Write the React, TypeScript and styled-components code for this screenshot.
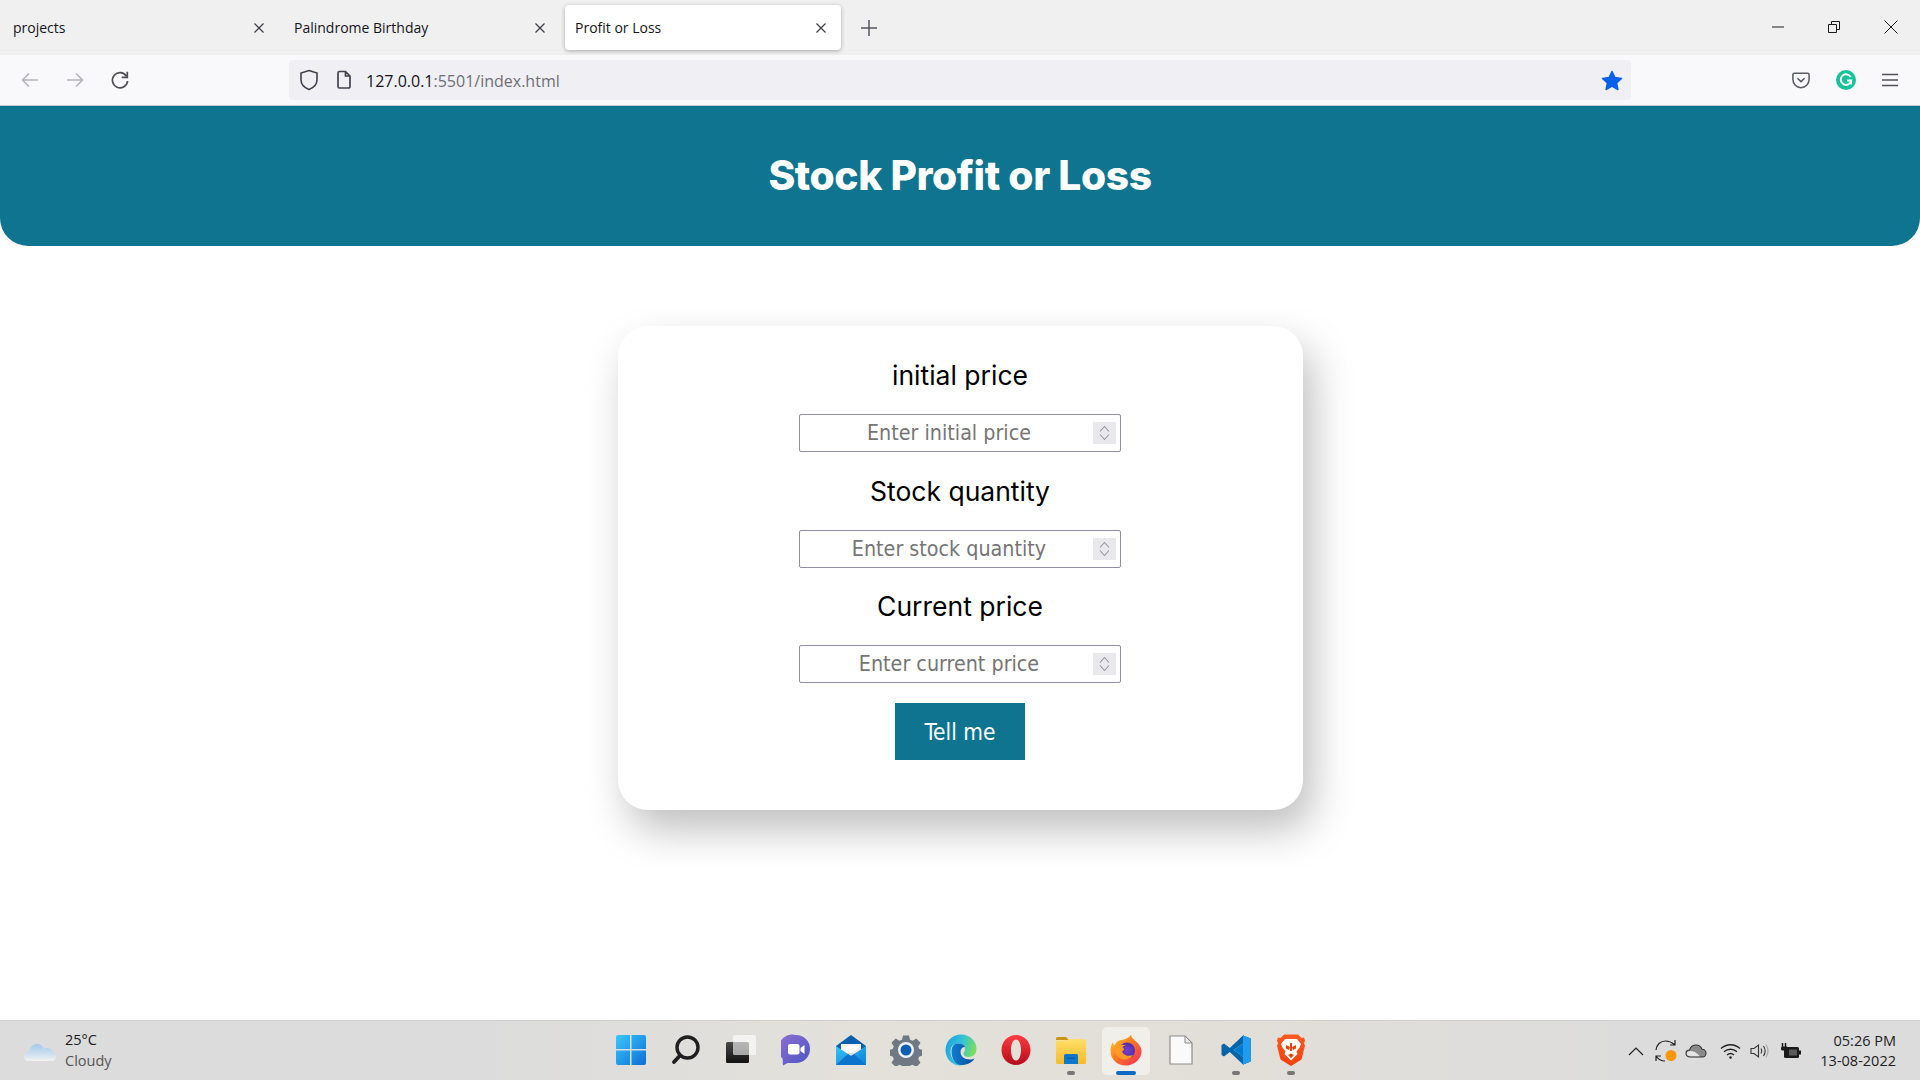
import React from "react";
import styled, { createGlobalStyle } from "styled-components";

const Global = createGlobalStyle`
  html, body { margin: 0; padding: 0; background: #fff; }
  * { box-sizing: border-box; }
`;

const UI = `"Open Sans", "Noto Sans", "Liberation Sans", sans-serif`;
const TITLE = `"Inter", "Lato", "Liberation Sans", sans-serif`;
const FORM = `"DejaVu Sans", "Open Sans", sans-serif`;

const Page = styled.div`
  width: 1920px;
  height: 1080px;
  display: flex;
  flex-direction: column;
  overflow: hidden;
  background: #fff;
`;

/* browser chrome */
const TabStrip = styled.div`
  height: 55px;
  flex: none;
  background: #f0f0f0;
  display: flex;
  align-items: center;
  padding-left: 3px;
  gap: 5px;
`;
const Tab = styled.div<{ $active?: boolean }>`
  width: 276px;
  height: 45px;
  padding: 0 14px 0 10px;
  display: flex;
  align-items: center;
  justify-content: space-between;
  font: 14px ${UI};
  color: #15141a;
  border-radius: 4px;
  background: ${(p) => (p.$active ? "#fff" : "transparent")};
  box-shadow: ${(p) => (p.$active ? "0 1px 4px rgba(0,0,0,.3)" : "none")};
`;
const NewTab = styled.div`
  width: 46px;
  display: flex;
  justify-content: center;
  color: #5b5b66;
`;
const Spacer = styled.div`
  flex: 1;
`;
const WindowControls = styled.div`
  display: flex;
  align-items: center;
  gap: 44px;
  padding-right: 22px;
  margin-top: -1px;
`;
const Toolbar = styled.div`
  height: 51px;
  flex: none;
  background: #f9f9fb;
  display: flex;
  align-items: center;
  border-bottom: 1px solid #c4c9cc;
  padding: 0 22px 0 20px;
`;
const NavGroup = styled.div`
  width: 269px;
  display: flex;
  align-items: center;
  gap: 25px;
`;
const UrlBar = styled.div`
  width: 1342px;
  height: 40px;
  background: #f0f0f4;
  border-radius: 4px;
  display: flex;
  align-items: center;
  padding: 0 8px 0 10px;
  gap: 17px;
`;
const UrlText = styled.div`
  flex: 1;
  font: 16px ${UI};
  color: #15141a;
  margin-left: -3px;
  padding-top: 2px;
  span {
    color: #6f6e75;
  }
`;
const ToolActions = styled.div`
  flex: 1;
  display: flex;
  align-items: center;
  justify-content: flex-end;
  gap: 26px;
`;

/* page */
const Banner = styled.header`
  height: 140px;
  flex: none;
  background: #0e7490;
  border-radius: 0 0 28px 28px;
  display: flex;
  align-items: center;
  justify-content: center;
  padding-bottom: 1px;
`;
const Title = styled.h1`
  margin: 0;
  font: 800 40.7px ${TITLE};
  letter-spacing: -0.4px;
  color: #fff;
`;
const Main = styled.main`
  flex: 1;
  display: flex;
  justify-content: center;
  padding-top: 80px;
`;
const Card = styled.form`
  width: 685px;
  height: 484px;
  border-radius: 30px;
  background: #fff;
  box-shadow: 10px 20px 40px rgba(0, 0, 0, 0.25);
  display: flex;
  flex-direction: column;
  align-items: center;
  padding-top: 29px;
`;
const Field = styled.label`
  height: 115.5px;
  display: flex;
  flex-direction: column;
  align-items: center;
`;
const FieldLabel = styled.span`
  height: 40px;
  margin-bottom: 19px;
  font: 400 26.5px/40px ${TITLE};
  color: #000;
`;
const InputBox = styled.div`
  width: 322px;
  height: 38px;
  border: 1px solid #8f8f9d;
  border-radius: 2px;
  display: flex;
  align-items: center;
  padding-right: 4px;
`;
const NumberInput = styled.input`
  flex: 1;
  min-width: 0;
  height: 100%;
  border: 0;
  outline: 0;
  background: transparent;
  text-align: center;
  padding: 0 0 1px 5px;
  font: 21.3px ${FORM};
  font-stretch: 75%;
  color: #15141a;
  appearance: textfield;
  &::placeholder {
    color: #757575;
    opacity: 1;
  }
  &::-webkit-inner-spin-button,
  &::-webkit-outer-spin-button {
    appearance: none;
    margin: 0;
  }
`;
const Spin = styled.span`
  flex: none;
  width: 23px;
  height: 22px;
  background: #e9e9ed;
  display: flex;
  align-items: center;
  justify-content: center;
`;
const Submit = styled.button`
  width: 130px;
  height: 57px;
  margin-top: 1.5px;
  border: 0;
  background: #0e7490;
  color: #fff;
  font: 22.5px ${FORM};
  font-stretch: 75%;
`;

/* taskbar */
const Taskbar = styled.footer`
  height: 60px;
  flex: none;
  border-top: 1px solid #cfcfcf;
  background: linear-gradient(90deg, #dcdcdc 0%, #dcdcdc 25%, #e3e1da 45%, #e2dfd9 65%, #dcdcdc 85%);
  display: grid;
  grid-template-columns: 1fr auto 1fr;
  align-items: center;
`;
const Weather = styled.div`
  display: flex;
  align-items: center;
  gap: 9px;
  padding-left: 24px;
`;
const WeatherText = styled.div`
  font: 14.5px/20.5px ${UI};
  color: #1a1a1a;
  small {
    display: block;
    font-size: 14.5px;
    color: #555;
  }
`;
const TaskIcons = styled.div`
  display: flex;
  gap: 7.08px;
  padding-left: 2px;
`;
const Tile = styled.div<{ $active?: boolean }>`
  position: relative;
  width: 48px;
  height: 48px;
  padding-bottom: 2px;
  border-radius: 5px;
  display: flex;
  align-items: center;
  justify-content: center;
  background: ${(p) => (p.$active ? "#f0efea" : "transparent")};
`;
const RunDot = styled.i<{ $active?: boolean }>`
  position: absolute;
  bottom: 0;
  left: 50%;
  transform: translateX(-50%);
  width: ${(p) => (p.$active ? "20px" : "8px")};
  height: 4px;
  border-radius: 2px;
  background: ${(p) => (p.$active ? "#0a6cc4" : "#777")};
`;
const Tray = styled.div`
  justify-self: end;
  display: flex;
  align-items: center;
  padding-right: 24px;
`;
const TrayIcon = styled.span<{ $gap: number }>`
  display: flex;
  margin-left: ${(p) => p.$gap}px;
`;
const Clock = styled.div`
  margin-left: 19px;
  text-align: right;
  font: 14.5px/20px ${UI};
  color: #222;
`;

/* drawings */
const Close = () => (
  <svg width="12" height="12" viewBox="0 0 12 12" fill="none" stroke="#3c3c44" strokeWidth="1.2">
    <path d="M1.5 1.5l9 9M10.5 1.5l-9 9" />
  </svg>
);
const Back = () => (
  <svg width="20" height="20" viewBox="0 0 20 20" fill="none" stroke="#b4b4ba" strokeWidth="1.6">
    <path d="M18 10H2.5M9 3.5L2.5 10 9 16.5" />
  </svg>
);
const Forward = () => (
  <svg width="20" height="20" viewBox="0 0 20 20" fill="none" stroke="#b4b4ba" strokeWidth="1.6">
    <path d="M2 10h15.5M11 3.5l6.5 6.5-6.5 6.5" />
  </svg>
);
const Reload = () => (
  <svg width="20" height="20" viewBox="0 0 20 20" fill="none" stroke="#4d4d55" strokeWidth="1.7">
    <path d="M16.5 6.2A7.6 7.6 0 1 0 17.6 11" />
    <path d="M17.3 1.8v5.6h-5.6" />
  </svg>
);
const Shield = () => (
  <svg width="20" height="22" viewBox="0 0 20 22" fill="none" stroke="#42414d" strokeWidth="1.6">
    <path d="M10 1.500l8 2.600v6.600c0 4.600-3.500 8-8 9.800-4.500-1.800-8-5.200-8-9.800V4.100z" />
  </svg>
);
const PageGlyph = () => (
  <svg width="16" height="20" viewBox="0 0 16 20" fill="none" stroke="#42414d" strokeWidth="1.7">
    <path d="M2 3a1.500 1.500 0 0 1 1.500-1.500H9.500L14 6v10.500A1.500 1.500 0 0 1 12.500 18h-9A1.500 1.500 0 0 1 2 16.500zM9.500 1.500V6H14" />
  </svg>
);
const Star = () => (
  <svg width="22" height="21" viewBox="0 0 22 21">
    <path
      fill="#0a60e8"
      stroke="#0a60e8"
      strokeWidth="1.5"
      strokeLinejoin="round"
      d="M11 1.500l2.900 6.100 6.600.8-4.900 4.500 1.300 6.600L11 16.200l-5.900 3.300 1.300-6.600L1.500 8.400l6.600-.8z"
    />
  </svg>
);
const Pocket = () => (
  <svg width="18" height="17" viewBox="0 0 20 18" fill="none" stroke="#5b5b66" strokeWidth="1.700">
    <path d="M2.500 1h15A1.500 1.500 0 0 1 19 2.500V8a9 9 0 0 1-18 0V2.500A1.500 1.500 0 0 1 2.500 1z" />
    <path strokeWidth="1.800" d="M6 6.500l4 3.800 4-3.800" />
  </svg>
);
const Grammarly = () => (
  <svg width="20" height="20" viewBox="0 0 20 20">
    <circle cx="10" cy="10" r="10" fill="#15c39a" />
    <path
      fill="none"
      stroke="#fff"
      strokeWidth="1.900"
      d="M14.700 7a5.300 5.300 0 1 0 .6 3.500h-4.300M15 11.500v3"
    />
  </svg>
);
const Menu = () => (
  <svg width="16" height="14" viewBox="0 0 16 14" stroke="#52525a" strokeWidth="1.500">
    <path d="M0 1.500h16M0 7h16M0 12.500h16" />
  </svg>
);
const Spinner = () => (
  <svg width="11" height="16" viewBox="0 0 11 16" fill="none" stroke="#9494a0" strokeWidth="1.1">
    <path d="M1 6.500l4.500-5 4.500 5M1 9.500l4.500 5 4.500-5" />
  </svg>
);

const Cloud = () => (
  <svg width="32" height="22" viewBox="0 0 32 22">
    <defs>
      <linearGradient id="wx" x1="0" y1="0" x2="0" y2="1">
        <stop offset="0" stopColor="#a5c8ec" />
        <stop offset=".6" stopColor="#cfe0f1" />
        <stop offset="1" stopColor="#f4f3ec" />
      </linearGradient>
    </defs>
    <path
      fill="url(#wx)"
      d="M5 21c-3 0-5-2-5-4.500S2.500 12 5 12c.800-5 4-8 8-8 3.500 0 6 2 7 5 1-.800 2.500-1.300 4-1 3.500.500 5 2.500 5.500 4.500 1.500.800 2.500 2.500 2.500 4 0 2.500-2 4.500-4.500 4.500z"
    />
  </svg>
);

const WinLogo = () => (
  <svg width="30" height="30" viewBox="0 0 30 30">
    <defs>
      <linearGradient id="win" x1="0" y1="0" x2="1" y2="1">
        <stop offset="0" stopColor="#3cc7fb" />
        <stop offset="1" stopColor="#0a6fd6" />
      </linearGradient>
    </defs>
    <path
      fill="url(#win)"
      d="M2 0h12v14H0V2a2 2 0 0 1 2-2zM15.500 0H28a2 2 0 0 1 2 2v12H15.500zM0 15.500h14V30H2a2 2 0 0 1-2-2zM15.500 15.500H30V28a2 2 0 0 1-2 2H15.500z"
    />
  </svg>
);
const SearchGlyph = () => (
  <svg width="30" height="30" viewBox="0 0 30 30" fill="none" stroke="#1f1f1f">
    <circle cx="16.500" cy="12.500" r="10.500" strokeWidth="3.400" />
    <path d="M9 20.500l-6 6.500" strokeWidth="3.800" strokeLinecap="round" />
  </svg>
);
const TaskView = () => (
  <svg width="30" height="30" viewBox="0 0 30 30">
    <defs>
      <linearGradient id="tv" x1="0" y1="0" x2="0" y2="1">
        <stop offset="0" stopColor="#4a4a4a" />
        <stop offset="1" stopColor="#111" />
      </linearGradient>
    </defs>
    <rect x="0" y="7" width="23" height="21" rx="1.500" fill="url(#tv)" />
    <rect x="7" y="0" width="23" height="20" rx="1.500" fill="#fff" fillOpacity=".6" />
  </svg>
);
const Chat = () => (
  <svg width="30" height="32" viewBox="0 0 30 32">
    <defs>
      <linearGradient id="chat" x1="0" y1="0" x2="1" y2="1">
        <stop offset="0" stopColor="#8f6fd0" />
        <stop offset="1" stopColor="#4a55c4" />
      </linearGradient>
    </defs>
    <path
      fill="url(#chat)"
      d="M15 1a14 14 0 0 1 0 28H6.500L2 31.500c-.500-2.500 0-5-.500-7A14 14 0 0 1 15 1z"
    />
    <rect x="7" y="10" width="11.500" height="10.500" rx="2" fill="#fff" />
    <path d="M19.500 14l4-3v9l-4-3z" fill="#fff" />
  </svg>
);
const Mail = () => (
  <svg width="30" height="30" viewBox="0 0 30 30">
    <defs>
      <linearGradient id="m1" x1="0" y1="0" x2="1" y2="1">
        <stop offset="0" stopColor="#35c4f5" />
        <stop offset="1" stopColor="#0d7fd8" />
      </linearGradient>
    </defs>
    <path fill="#0b5fb0" d="M15 0l15 11v3H0v-3z" />
    <path fill="#f4f4f4" d="M5 9h20v9H5z" />
    <path fill="url(#m1)" d="M0 11l15 10 15-10v19H0z" />
    <path fill="#0b74cc" d="M0 30l12-11 3 2 3-2 12 11z" />
    <path fill="#fff" d="M6 11h18l-9 7z" />
  </svg>
);
const Gear = () => (
  <svg width="32" height="32" viewBox="0 0 32 32">
    <path
      fill="#6e7984"
      d="M13 1.500h6l1 4.200 2.600 1.100 3.700-2.300 4.200 4.200-2.300 3.700 1.100 2.600 4.200 1v5.500l-4.200 1-1.100 2.600 2.300 3.700-4.200 4.200-3.700-2.300-2.600 1.100-1 4.200h-6l-1-4.200-2.600-1.100-3.700 2.300-4.200-4.200 2.300-3.700-1.100-2.600-4.200-1v-5.500l4.200-1 1.100-2.600-2.300-3.700 4.200-4.200 3.700 2.300 2.600-1.100z"
    />
    <circle cx="16" cy="16" r="8" fill="#eef2f5" />
    <circle cx="16" cy="16" r="5.500" fill="#0f5fb0" />
  </svg>
);
const Edge = () => (
  <svg width="32" height="32" viewBox="0 0 32 32">
    <defs>
      <linearGradient id="e1" x1="0" y1="0" x2="1" y2=".3">
        <stop offset="0" stopColor="#1a9fe0" />
        <stop offset=".55" stopColor="#33c2d8" />
        <stop offset="1" stopColor="#7ade5c" />
      </linearGradient>
      <linearGradient id="e3" x1="0" y1="0" x2="1" y2="0">
        <stop offset="0" stopColor="#0c7fd4" />
        <stop offset="1" stopColor="#0a4a9c" />
      </linearGradient>
    </defs>
    <path
      fill="url(#e1)"
      d="M16 .5C25 .5 31.500 7 31.500 15c0 5-3.500 8-8 8-3 0-5-1.500-5-3.500 0-1.500 1.500-2 1.500-4.500 0-3-3-5.500-7-5.500-4.500 0-7.500 3-7.500 8 0 7 5.500 13 12 13.500-.5 0-1 .5-2.500.500C7 31.500.5 24.500.5 16 .5 7.500 7 .5 16 .5z"
    />
    <path
      fill="url(#e3)"
      d="M6.500 17.500c0-5.500 3-8 6.500-8 3.500 0 6 1.500 7 3.500-3 0-4.500 2-4.500 5 0 4.500 4 7.500 9 7.500 2.500 0 4-.5 5-1-2.500 4-7 6.500-13 6.500C10.500 31 6.500 25 6.500 17.500z"
    />
  </svg>
);
const Opera = () => (
  <svg width="30" height="32" viewBox="0 0 30 32">
    <defs>
      <linearGradient id="op" x1="0" y1="0" x2="0" y2="1">
        <stop offset="0" stopColor="#ff3b3f" />
        <stop offset="1" stopColor="#b30c1c" />
      </linearGradient>
    </defs>
    <path
      fill="url(#op)"
      fillRule="evenodd"
      d="M15 1c8 0 14.500 6.500 14.500 15S23 31 15 31 .5 24.500.5 16 7 1 15 1zm0 4.500c-3 0-5 4.700-5 10.500s2 10.500 5 10.500 5-4.700 5-10.500S18 5.500 15 5.500z"
    />
  </svg>
);
const Folder = () => (
  <svg width="30" height="28" viewBox="0 0 30 28">
    <defs>
      <linearGradient id="fo" x1="0" y1="0" x2="0" y2="1">
        <stop offset="0" stopColor="#ffe06a" />
        <stop offset="1" stopColor="#f8b92a" />
      </linearGradient>
    </defs>
    <path fill="#c99417" d="M1.500 1H10l3 3h-13V2.500A1.500 1.500 0 0 1 1.500 1z" />
    <path fill="url(#fo)" d="M0 4.500h10.500L13 3h15.500A1.500 1.500 0 0 1 30 4.500v22a1.500 1.500 0 0 1-1.500 1.500h-27A1.500 1.500 0 0 1 0 26.500z" />
    <path fill="#0f78c8" d="M8 19.500a1.500 1.500 0 0 1 1.500-1.500h11a1.500 1.500 0 0 1 1.500 1.500V28H8z" />
    <path fill="#0a5ca6" d="M11 21.500h8v1.500h-8z" />
  </svg>
);
const Firefox = () => (
  <svg width="32" height="32" viewBox="0 0 32 32">
    <defs>
      <linearGradient id="ff" x1="0" y1="0" x2="1" y2="1">
        <stop offset="0" stopColor="#ffd23a" />
        <stop offset=".45" stopColor="#ff7a1f" />
        <stop offset="1" stopColor="#f0285f" />
      </linearGradient>
      <radialGradient id="ffc">
        <stop offset="0" stopColor="#7a3fd0" />
        <stop offset="1" stopColor="#4f2ea8" />
      </radialGradient>
    </defs>
    <path
      fill="url(#ff)"
      d="M21 .5c.5 3 2 4.500 4.500 6.500C29 10 31.500 13 31.500 17c0 8-7 14.500-15.500 14.500S.5 25.500.5 17c0-3.500.8-6.500 2.500-9 0 1.500.5 2.500 1.500 3.500C5.500 8.500 8 6.500 11 6c3.500-.5 8-1.500 10-5.500z"
    />
    <circle cx="17" cy="16.500" r="8" fill="url(#ffc)" />
    <path
      fill="#ff9a26"
      d="M5 14c3-3 7-4 11-2.500-1.800 0-3 .8-3.500 2 2.500 1 1.500 3.500-.5 3.500 1 4 6 6 11 4-2 3-5 4.500-8 4.500-6 0-11-5-10-11.500z"
    />
  </svg>
);
const FileGlyph = () => (
  <svg width="24" height="30" viewBox="0 0 24 30">
    <path
      fill="#fafafa"
      stroke="#8e8e8e"
      strokeWidth="1.200"
      d="M1 1h15l7 7v21H1z"
    />
    <path fill="#e8e8e8" stroke="#8e8e8e" strokeWidth="1" d="M16 1v7h7z" />
  </svg>
);
const VSCode = () => (
  <svg width="30" height="30" viewBox="0 0 30 30">
    <path fill="#0065a9" d="M22 .5L8.800 13 3 8.500.5 10v10L3 21.500 8.800 17 22 29.500l7.500-3v-23zM22 8.500v13L12.500 15z" fillRule="evenodd" />
    <path fill="#007acc" d="M22 .5l7.500 3v23l-7.500 3V21.500L12.500 15 22 8.500z" />
    <path fill="#1f9cf0" d="M22 .5l7.500 3v23l-7.500 3z" />
  </svg>
);
const Brave = () => (
  <svg width="28" height="32" viewBox="0 0 28 32">
    <defs>
      <linearGradient id="br" x1="0" y1="0" x2="0" y2="1">
        <stop offset="0" stopColor="#ff5a22" />
        <stop offset="1" stopColor="#f0400a" />
      </linearGradient>
    </defs>
    <path
      fill="url(#br)"
      d="M7 .5h14L24.500 4 27 3.500l1 3-1 3 1 2-3.500 14L14 32 3.500 25.500 0 11.500l1-2-1-3 1-3L3.500 4z"
    />
    <path
      fill="#fff"
      d="M8 5h12l2.500 3L24 10l-1.500 3.500-3 4 1 2.500-6.500 6.500L7.500 20l1-2.500-3-4L4 10l1.500-2z"
    />
    <path fill="#f0400a" d="M9 11l4 2-1 3-3-1.500zM19 11l-4 2 1 3 3-1.500zM11 21l3-1.500 3 1.500-3 3zM13 9h2v8h-2z" />
  </svg>
);

const Chevron = () => (
  <svg width="16" height="10" viewBox="0 0 16 10" fill="none" stroke="#1f1f1f" strokeWidth="1.200">
    <path d="M1 9l7-7 7 7" />
  </svg>
);
const Sync = () => (
  <svg width="22" height="24" viewBox="0 0 22 24" fill="none" stroke="#222" strokeWidth="1.200">
    <path d="M1 11C1.500 5.500 5.500 2 10.500 2c3.500 0 6.500 1.500 9 3.500M20 1v5h-5" />
    <path d="M1 17c2 3 5 5 9 5M1 22v-5h5" />
    <circle cx="16" cy="16.500" r="5.500" fill="#ff9800" stroke="none" />
  </svg>
);
const TrayCloud = () => (
  <svg width="22" height="14" viewBox="0 0 22 14">
    <path
      fill="#8a8a8a"
      stroke="#333"
      strokeWidth="1.100"
      d="M5 13c-2.500 0-4-1.600-4-3.500S2.500 6 4.500 6C5.500 3 8 1 11 1c2.800 0 5 1.500 6 4.200 2.500 0 4 2 4 4S19.500 13 17.500 13z"
    />
    <path fill="#e4e4e4" d="M5.500 12.300c-2 0-3.700-1.100-3.700-2.800S3.500 7 5.500 7c3 0 5 1 6.500 2.500L15 12.300z" />
  </svg>
);
const Wifi = () => (
  <svg width="21" height="16" viewBox="0 0 21 16" fill="none" stroke="#222" strokeWidth="1.300">
    <path d="M1 5.500c5.500-5 13.500-5 19 0M4 8.800c3.800-3.400 9.200-3.400 13 0M7 12c2-1.700 5-1.700 7 0" />
    <circle cx="10.500" cy="14.500" r="1.300" fill="#222" stroke="none" />
  </svg>
);
const Volume = () => (
  <svg width="20" height="16" viewBox="0 0 20 16" fill="none" stroke="#333" strokeWidth="1.100">
    <path d="M1 5.500h3L8.500 2v12L4 10.500H1z" />
    <path d="M11 5.500c1 1.500 1 3.500 0 5M13.500 3c2 3 2 7 0 10" />
    <path stroke="#aaa" d="M16 1.500c2.500 4 2.500 9 0 13" />
  </svg>
);
const Battery = () => (
  <svg width="20" height="16" viewBox="0 0 20 16">
    <rect x="3" y="4" width="15" height="11" rx="1.500" fill="#1a1a1a" />
    <rect x="18" y="7.500" width="2" height="4" fill="#1a1a1a" />
    <path stroke="#1a1a1a" strokeWidth="1.500" d="M1.500 0v4M4.500 0v4" fill="none" />
    <rect x="0" y="3.500" width="7" height="4" rx="1.500" fill="#1a1a1a" />
    <rect x="8" y="6.500" width="8" height="6" fill="#5a5a5a" />
  </svg>
);
const Minimize = () => (
  <svg width="12" height="2" viewBox="0 0 12 2" stroke="#1a1a1a" strokeWidth="1">
    <path d="M0 1h12" />
  </svg>
);
const Restore = () => (
  <svg width="12" height="12" viewBox="0 0 12 12" fill="none" stroke="#1a1a1a" strokeWidth="1">
    <path d="M.5 3.500h8v8h-8zM3.500 3.500v-3h8v8h-3" />
  </svg>
);
const WinClose = () => (
  <svg width="14" height="14" viewBox="0 0 14 14" fill="none" stroke="#1a1a1a" strokeWidth="1">
    <path d="M.5.500l13 13M13.500.500l-13 13" />
  </svg>
);
const Plus = () => (
  <svg width="16" height="16" viewBox="0 0 16 16" stroke="#55555e" strokeWidth="1.500">
    <path d="M8 0v16M0 8h16" />
  </svg>
);

const tiles: { icon: React.ReactNode; dot?: boolean; active?: boolean }[] = [
  { icon: <WinLogo /> },
  { icon: <SearchGlyph /> },
  { icon: <TaskView /> },
  { icon: <Chat /> },
  { icon: <Mail /> },
  { icon: <Gear /> },
  { icon: <Edge /> },
  { icon: <Opera /> },
  { icon: <Folder />, dot: true },
  { icon: <Firefox />, dot: true, active: true },
  { icon: <FileGlyph /> },
  { icon: <VSCode />, dot: true },
  { icon: <Brave />, dot: true },
];

const fields = [
  { label: "initial price", placeholder: "Enter initial price" },
  { label: "Stock quantity", placeholder: "Enter stock quantity" },
  { label: "Current price", placeholder: "Enter current price" },
];

const tabs = ["projects", "Palindrome Birthday", "Profit or Loss"];

export default function App() {
  return (
    <Page>
      <Global />
      <TabStrip>
        {tabs.map((t, i) => (
          <Tab key={t} $active={i === 2}>
            {t}
            <Close />
          </Tab>
        ))}
        <NewTab>
          <Plus />
        </NewTab>
        <Spacer />
        <WindowControls>
          <Minimize />
          <Restore />
          <WinClose />
        </WindowControls>
      </TabStrip>
      <Toolbar>
        <NavGroup>
          <Back />
          <Forward />
          <Reload />
        </NavGroup>
        <UrlBar>
          <Shield />
          <PageGlyph />
          <UrlText>
            127.0.0.1<span>:5501/index.html</span>
          </UrlText>
          <Star />
        </UrlBar>
        <ToolActions>
          <Pocket />
          <Grammarly />
          <Menu />
        </ToolActions>
      </Toolbar>
      <Banner>
        <Title>Stock Profit or Loss</Title>
      </Banner>
      <Main>
        <Card onSubmit={(e) => e.preventDefault()}>
          {fields.map((f) => (
            <Field key={f.label}>
              <FieldLabel>{f.label}</FieldLabel>
              <InputBox>
                <NumberInput type="number" placeholder={f.placeholder} />
                <Spin>
                  <Spinner />
                </Spin>
              </InputBox>
            </Field>
          ))}
          <Submit type="submit">Tell me</Submit>
        </Card>
      </Main>
      <Taskbar>
        <Weather>
          <Cloud />
          <WeatherText>
            25°C
            <small>Cloudy</small>
          </WeatherText>
        </Weather>
        <TaskIcons>
          {tiles.map((t, i) => (
            <Tile key={i} $active={t.active}>
              {t.icon}
              {t.dot && <RunDot $active={t.active} />}
            </Tile>
          ))}
        </TaskIcons>
        <Tray>
          <TrayIcon $gap={0}>
            <Chevron />
          </TrayIcon>
          <TrayIcon $gap={11}>
            <Sync />
          </TrayIcon>
          <TrayIcon $gap={8}>
            <TrayCloud />
          </TrayIcon>
          <TrayIcon $gap={13}>
            <Wifi />
          </TrayIcon>
          <TrayIcon $gap={9}>
            <Volume />
          </TrayIcon>
          <TrayIcon $gap={11}>
            <Battery />
          </TrayIcon>
          <Clock>
            05:26 PM
            <br />
            13-08-2022
          </Clock>
        </Tray>
      </Taskbar>
    </Page>
  );
}
